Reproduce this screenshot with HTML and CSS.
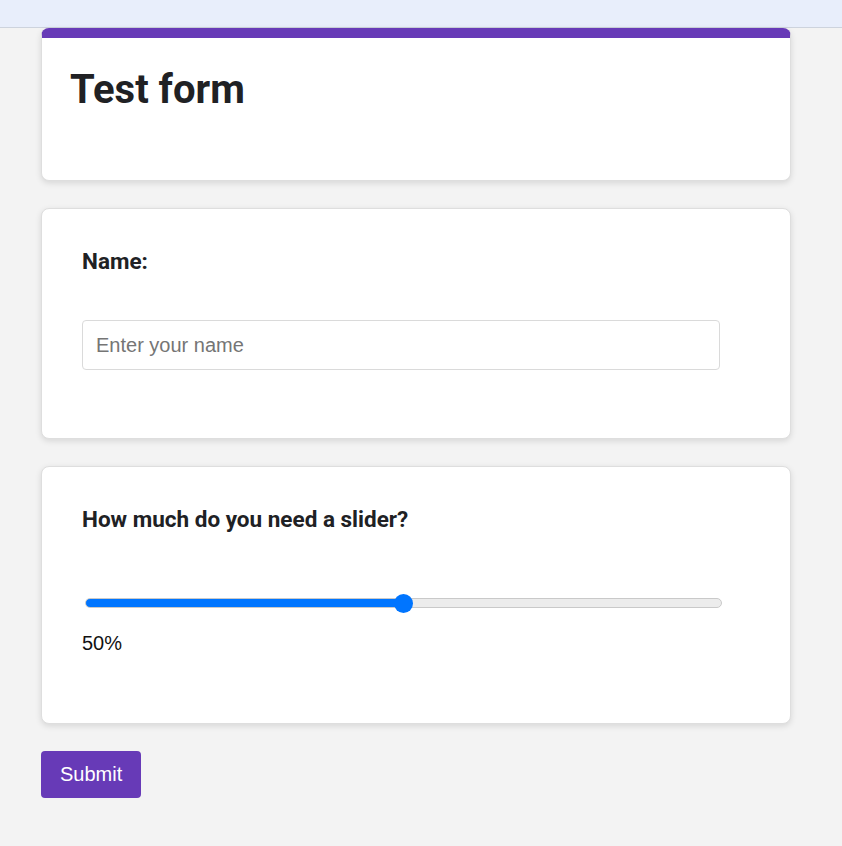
FILE: index.html
```html
<!DOCTYPE html>
<html>
<head>
<meta charset="utf-8">
<link rel="stylesheet" href="styles.css">
</head>
<body>
<div class="topbar"></div>
<main class="form">
  <section class="card card-head">
    <h1 class="title">Test form</h1>
  </section>
  <section class="card">
    <label class="question" for="name">Name:</label>
    <input class="text-input" id="name" type="text" placeholder="Enter your name">
  </section>
  <section class="card card-slider">
    <div class="question">How much do you need a slider?</div>
    <input class="slider" type="range" min="0" max="100" value="50">
    <div class="value">50%</div>
  </section>
  <button class="submit" type="button">Submit</button>
</main>
</body>
</html>
```
FILE: styles.css
```css
* { box-sizing: border-box; }
html, body { margin: 0; padding: 0; }
body {
  background: #f3f3f3;
  font-family: "Liberation Sans", Arial, sans-serif;
  height: 846px;
  overflow: hidden;
}
.topbar {
  height: 28px;
  background: #e8eefb;
  border-bottom: 1px solid #cdd3dd;
}
.form {
  width: 750px;
  margin-left: 41px;
  display: flex;
  flex-direction: column;
  align-items: flex-start;
  gap: 27px;
}
.card {
  width: 750px;
  background: #fff;
  border: 1px solid #dedede;
  border-radius: 8px;
  box-shadow: 0 2px 6px rgba(0,0,0,0.12);
  padding: 38px 40px 68px;
  display: flex;
  flex-direction: column;
  align-items: flex-start;
}
.card-head {
  border-top: 10px solid #673ab7;
  height: 153px;
  padding: 28px 28px;
}
.title {
  margin: 0;
  font-family: Roboto, sans-serif;
  font-weight: 700;
  font-size: 40px;
  color: #202124;
  line-height: 47px;
}
.question {
  font-family: Roboto, sans-serif;
  font-weight: 700;
  font-size: 22.5px;
  line-height: 28px;
  color: #202124;
}
.text-input {
  margin-top: 45px;
  width: 638px;
  height: 50px;
  border: 1px solid #dadada;
  border-radius: 4px;
  padding: 0 13px;
  font-family: "Liberation Sans", Arial, sans-serif;
  font-size: 20px;
  color: #202124;
  outline: none;
}
.text-input::placeholder { color: #757575; }
.card-slider { padding-bottom: 68px; }
.slider {
  -webkit-appearance: none;
  appearance: none;
  margin: 60px 0 0 3px;
  width: 637px;
  height: 20px;
  background: transparent;
}
.slider::-webkit-slider-runnable-track {
  height: 10px;
  border-radius: 5px;
  border: 1px solid #c9c9c9;
  background: linear-gradient(to right, #0075ff 50%, #ececec 50%);
}
.slider::-webkit-slider-thumb {
  -webkit-appearance: none;
  appearance: none;
  width: 19px;
  height: 19px;
  border-radius: 50%;
  background: #0075ff;
  border: none;
  margin-top: -5.5px;
}
.value {
  margin-top: 19px;
  font-size: 20px;
  line-height: 23px;
  color: #111;
}
.submit {
  background: #673ab7;
  color: #fff;
  border: none;
  border-radius: 4px;
  font-family: "Liberation Sans", Arial, sans-serif;
  font-size: 20px;
  line-height: 23px;
  padding: 12px 19px;
  width: 100px;
  height: 47px;
}
```
